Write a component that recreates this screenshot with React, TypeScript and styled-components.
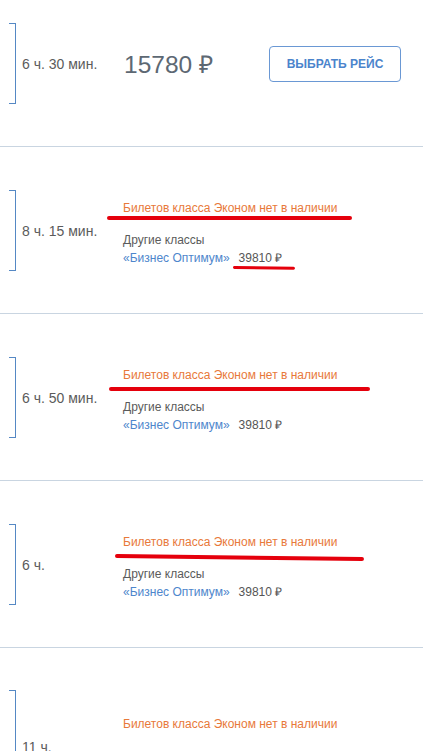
import React from "react";
import styled, { createGlobalStyle } from "styled-components";

const GlobalStyle = createGlobalStyle`
  body {
    margin: 0;
    background: #fff;
    font-family: "Liberation Sans", Arial, sans-serif;
    overflow: hidden;
  }
`;

const List = styled.div`
  margin-top: -20px;
`;

type RowProps = {
  $padTop?: number;
};

const Row = styled.div<RowProps>`
  position: relative;
  display: flex;
  align-items: center;
  padding: ${({ $padTop }) => $padTop ?? 43}px 0 42px;
  border-bottom: 1px solid #c9d5e1;
`;

type BracketProps = {
  $h: number;
};

const Bracket = styled.div<BracketProps>`
  flex: none;
  box-sizing: border-box;
  width: 7px;
  height: ${({ $h }) => $h}px;
  margin-left: 9px;
  border: 1px solid #5588c4;
  border-left: none;
`;

const Duration = styled.div`
  flex: none;
  width: 101px;
  padding-left: 6px;
  font-size: 14px;
  color: #5b5b5b;
  white-space: nowrap;
`;

const Price = styled.div`
  font-size: 24.5px;
  color: #5d6873;
  margin-left: 1px;
`;

const SelectButton = styled.button`
  margin-left: auto;
  margin-right: 22px;
  width: 132px;
  height: 36px;
  background: #fff;
  border: 1px solid #6a98d4;
  border-radius: 4px;
  color: #4b84cc;
  font-family: "Liberation Sans", Arial, sans-serif;
  font-size: 12px;
  font-weight: bold;
  cursor: pointer;
`;

const Info = styled.div`
  display: flex;
  flex-direction: column;
  padding-top: 4px;
  font-size: 12px;
  line-height: 18px;
`;

const Missing = styled.div`
  color: #e8793a;
  margin-bottom: 14px;
`;

const Other = styled.div`
  color: #5b5b5b;
`;

const Offer = styled.div`
  display: flex;
  gap: 9px;
`;

const ClassLink = styled.a`
  color: #4e86cc;
  text-decoration: none;
`;

const OfferPrice = styled.span`
  color: #555;
`;

type MarkProps = {
  $x: number;
  $y: number;
  $w: number;
  $h?: number;
  $rot?: number;
};

// red hand-drawn underlines over the screenshot
const Mark = styled.div<MarkProps>`
  position: absolute;
  left: ${({ $x }) => $x}px;
  top: ${({ $y }) => $y}px;
  width: ${({ $w }) => $w}px;
  height: ${({ $h }) => $h ?? 4}px;
  background: #e5000c;
  border-radius: 2px;
  transform: rotate(${({ $rot }) => $rot ?? 0}deg);
  transform-origin: left center;
`;

type MarkType = { x: number; y: number; w: number; h?: number; rot?: number };

type FlightType = {
  duration: string;
  bracket: number;
  padTop?: number;
  marks: MarkType[];
};

const flights: FlightType[] = [
  {
    duration: "8 ч. 15 мин.",
    bracket: 81,
    marks: [
      { x: 107, y: 69, w: 245 },
      { x: 233, y: 119, w: 62, h: 3, rot: 0.8 },
    ],
  },
  {
    duration: "6 ч. 50 мин.",
    bracket: 81,
    marks: [{ x: 109, y: 73, w: 261 }],
  },
  {
    duration: "6 ч.",
    bracket: 81,
    marks: [{ x: 115, y: 73, w: 249, rot: 0.7 }],
  },
  {
    duration: "11 ч.",
    bracket: 114,
    padTop: 42,
    marks: [],
  },
];

function App() {
  return (
    <>
      <GlobalStyle />
      <List>
        <Row>
          <Bracket $h={81} />
          <Duration>6 ч. 30 мин.</Duration>
          <Price>15780 ₽</Price>
          <SelectButton>ВЫБРАТЬ РЕЙС</SelectButton>
        </Row>
        {flights.map((f, i) => (
          <Row key={i} $padTop={f.padTop}>
            <Bracket $h={f.bracket} />
            <Duration>{f.duration}</Duration>
            <Info>
              <Missing>Билетов класса Эконом нет в наличии</Missing>
              <Other>Другие классы</Other>
              <Offer>
                <ClassLink href="#">«Бизнес Оптимум»</ClassLink>
                <OfferPrice>39810 ₽</OfferPrice>
              </Offer>
            </Info>
            {f.marks.map((m, j) => (
              <Mark key={j} $x={m.x} $y={m.y} $w={m.w} $h={m.h} $rot={m.rot} />
            ))}
          </Row>
        ))}
      </List>
    </>
  );
}

export default App;
